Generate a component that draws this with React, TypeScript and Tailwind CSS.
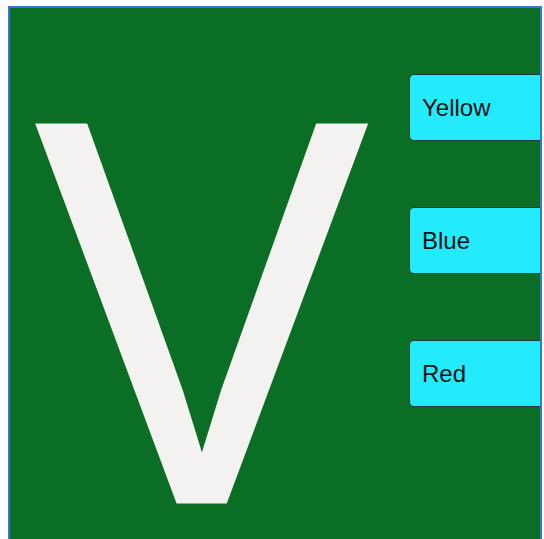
import React from "react";

export default function App() {
  const labels = ["Yellow", "Blue", "Red"];
  return (
    <div className="w-[544px] h-[539px] bg-white overflow-hidden">
      <div className="ml-[8px] mt-[6px] w-[534px] h-[560px] border-2 border-[#3b73d9] bg-[#0b6e25] overflow-hidden flex">
        <div className="w-[399px] shrink-0 pl-[25px] pt-[30px]">
          <span
            className="block origin-left scale-x-[0.912] leading-none text-[#f4f1f1] text-[548px] [-webkit-text-stroke:3px_#f4f1f1]"
            style={{ fontFamily: '"Liberation Sans", Arial, sans-serif' }}
          >
            V
          </span>
        </div>
        <div className="flex flex-col gap-[66px] pt-[66px]">
          {labels.map((l) => (
            <button
              key={l}
              className="w-[160px] h-[67px] shrink-0 flex items-center pl-[12px] rounded-[5px] border border-[#1c3b3b] bg-[#24ebfc] text-[24px] text-[#111]"
              style={{ fontFamily: '"Liberation Sans", Arial, sans-serif' }}
            >
              {l}
            </button>
          ))}
        </div>
      </div>
    </div>
  );
}
